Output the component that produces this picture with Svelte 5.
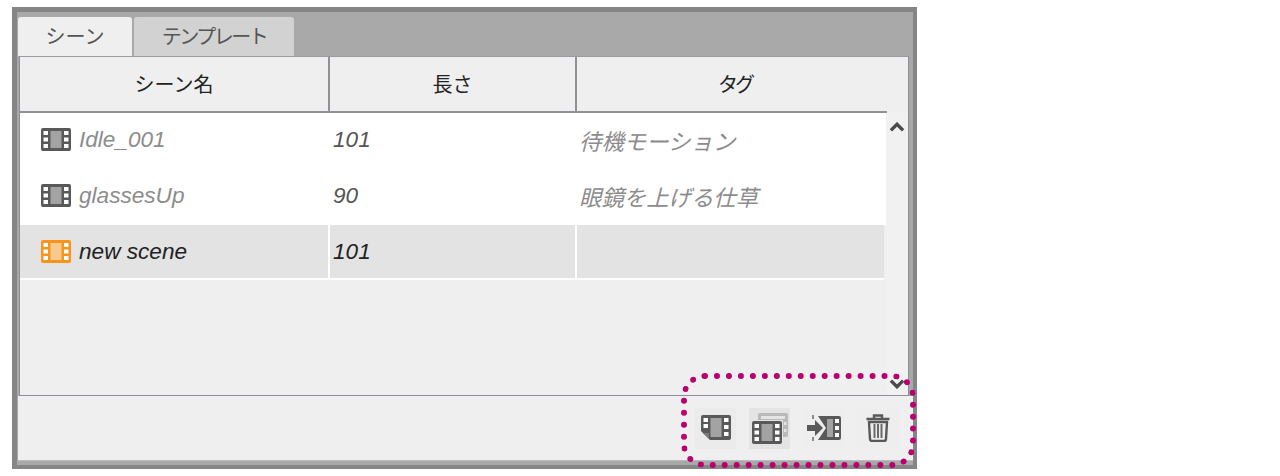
<script>
  const rows = [
    { name: "Idle_001", len: "101", tag: "待機モーション" },
    { name: "glassesUp", len: "90", tag: "眼鏡を上げる仕草" },
    { name: "new scene", len: "101", tag: "", selected: true }
  ]
</script>

{#snippet film(color, mid)}
  <svg class="film" viewBox="0 0 30 23" width="30" height="23">
    <rect width="30" height="23" rx="2" fill={color} />
    <rect x="9.5" y="3" width="11" height="17" fill={mid} />
    {#each [3, 9.5, 16] as y}
      <rect x="2.5" {y} width="4.5" height="4" fill="#fff" />
      <rect x="23" {y} width="4.5" height="4" fill="#fff" />
    {/each}
  </svg>
{/snippet}

<div class="window">
  <div class="tabs">
    <div class="tab active">シーン</div>
    <div class="tab tight">テンプレート</div>
  </div>

  <div class="panel">
    <div class="head">
      <div class="hcell">シーン名</div>
      <div class="hcell">長さ</div>
      <div class="hcell last">タグ</div>
    </div>
    <div class="body">
      <div class="list">
        {#each rows as row}
          <div class="row" class:selected={row.selected}>
            <div class="cell first">
              {@render film(row.selected ? "#f7941d" : "#595959", row.selected ? "#f8c98c" : "#a3a3a3")}
              <span>{row.name}</span>
            </div>
            <div class="cell num">{row.len}</div>
            <div class="cell tag">{row.tag}</div>
          </div>
        {/each}
      </div>
      <div class="scroll">
        <svg viewBox="0 0 14 9" width="16" height="10"><path d="M1.5 7.5 7 2l5.5 5.5" fill="none" stroke="#4a4a4a" stroke-width="3" /></svg>
        <svg viewBox="0 0 14 9" width="16" height="10"><path d="M1.5 1.5 7 7l5.5-5.5" fill="none" stroke="#4a4a4a" stroke-width="3" /></svg>
      </div>
    </div>
  </div>

  <div class="footer">
    <button class="tool">
      <svg viewBox="0 0 30 26" width="30" height="26">
        <path d="M2 0h26a2 2 0 0 1 2 2v21a2 2 0 0 1-2 2H9l-9-9V2a2 2 0 0 1 2-2z" fill="#595959" />
        <rect x="9.5" y="3" width="11" height="19" fill="#a3a3a3" />
        {#each [3, 9] as y}<rect x="2.5" {y} width="4.5" height="4" fill="#fff" />{/each}
        {#each [3, 10, 17] as y}<rect x="23" {y} width="4.5" height="4" fill="#fff" />{/each}
        <path d="M2 18h6v6z" fill="#7a7a7a" />
      </svg>
    </button>
    <button class="tool on">
      <svg viewBox="0 0 36 31" width="36" height="31">
        <rect x="6" y="0" width="30" height="24" rx="2" fill="#b9b9b9" />
        <rect x="9" y="3" width="24" height="3" fill="#e4e4e4" />
        <rect x="32" y="9" width="2.5" height="3" fill="#e4e4e4" />
        <rect x="32" y="16" width="2.5" height="3" fill="#e4e4e4" />
        <rect x="0" y="7" width="31" height="24" fill="#e4e4e4" />
        <rect x="0" y="8" width="30" height="23" rx="2" fill="#595959" />
        <rect x="9.5" y="11" width="11" height="17" fill="#a3a3a3" />
        {#each [11, 17.5, 24] as y}
          <rect x="2.5" {y} width="4.5" height="4" fill="#fff" />
          <rect x="23" {y} width="4.5" height="4" fill="#fff" />
        {/each}
      </svg>
    </button>
    <button class="tool plain">
      <svg viewBox="0 0 34 26" width="34" height="26">
        <path d="M11 1h21a2 2 0 0 1 2 2v20a2 2 0 0 1-2 2H11l8-12z" fill="#595959" />
        <rect x="20" y="4" width="6" height="18" fill="#a3a3a3" />
        {#each [4, 11, 18] as y}<rect x="28" {y} width="4" height="4" fill="#fff" />{/each}
        <path d="M0 10h8V5l8 8-8 8v-5H0z" fill="#595959" />
        <rect x="5" y="0" width="2" height="4" fill="#8a8a8a" />
        <rect x="5" y="22" width="2" height="4" fill="#8a8a8a" />
      </svg>
    </button>
    <button class="tool plain">
      <svg viewBox="0 0 24 28" width="24" height="28">
        <path d="M8 4V1.5h8V4M0.5 5h23" fill="none" stroke="#595959" stroke-width="2.4" />
        <path d="M3 8h18l-1 17a2 2 0 0 1-2 2H6a2 2 0 0 1-2-2z" fill="none" stroke="#595959" stroke-width="2.4" />
        <path d="M8.5 10v14M12 10v14M15.5 10v14" stroke="#6a6a6a" stroke-width="2" />
      </svg>
    </button>
  </div>

  <div class="highlight"></div>
</div>

<style>
  :global(body) {
    background: #fff;
  }

  .window {
    position: relative;
    box-sizing: border-box;
    width: 905px;
    height: 462px;
    margin: 7px 0 0 12px;
    border: 5px solid #858585;
    border-bottom-width: 4px;
    border-right-width: 4px;
    background: #a9a9a9;
    font-family: "Noto Sans CJK JP", "Liberation Sans", sans-serif;
    display: flex;
    flex-direction: column;
    color: #333;
  }

  .tabs {
    display: flex;
    gap: 2px;
    height: 44px;
    padding: 5px 0 0 1px;
    box-sizing: border-box;
    flex: none;
  }

  .tab {
    width: 160px;
    background: #d2d2d2;
    border-radius: 3px 3px 0 0;
    text-align: center;
    font-size: 20px;
    line-height: 37px;
    color: #555;
  }

  .tab.tight {
    letter-spacing: -2.5px;
  }

  .tab.active {
    width: 114px;
    background: #efefef;
  }

  .panel {
    box-sizing: border-box;
    height: 340px;
    flex: none;
    margin: 0 4px 0 2px;
    border: 1px solid #8c8f96;
    border-top-color: #9a9ca2;
    background: #efefef;
    display: flex;
    flex-direction: column;
  }

  .head {
    display: grid;
    grid-template-columns: 310px 247px 1fr;
    height: 56px;
    flex: none;
    position: relative;
    box-sizing: border-box;
  }

  .hcell {
    border-right: 2px solid #8f9196;
    border-bottom: 2px solid #8f9196;
    text-align: center;
    font-size: 20px;
    line-height: 54px;
    color: #222;
  }

  .hcell.last {
    border-right: none;
    padding-left: 6px;
    margin-right: 21px;
    letter-spacing: -3px;
  }

  .body {
    flex: 1;
    display: flex;
    min-height: 0;
  }

  .list {
    width: 866px;
    flex: none;
  }

  .row {
    display: grid;
    grid-template-columns: 310px 247px 1fr;
    height: 56px;
    background: #fff;
    align-items: center;
  }

  .row.selected {
    background: #e3e3e3;
    color: #222;
    height: 55px;
    align-items: stretch;
    margin-right: 2px;
  }

  .cell {
    display: flex;
    align-items: center;
    font-family: "Liberation Sans", "Noto Sans CJK JP", sans-serif;
    font-style: italic;
    font-size: 22.6px;
    color: #8c8c8c;
    height: 100%;
    box-sizing: border-box;
    padding-bottom: 2px;
    border-right: 2px solid transparent;
  }

  .selected .cell {
    color: #222;
    border-right-color: #fff;
    border-bottom: 2px solid #fff;
    padding-bottom: 0;
  }

  .selected .cell.tag {
    border-right: none;
  }

  .first {
    padding-left: 21px;
    gap: 8px;
  }

  .num {
    padding-left: 3px;
    color: #555;
  }

  .tag {
    padding-left: 2px;
    font-size: 22.4px;
  }

  .film {
    flex: none;
    margin-bottom: 1px;
  }

  .scroll {
    flex: 1;
    display: flex;
    flex-direction: column;
    justify-content: space-between;
    align-items: center;
    padding: 9px 0 6px;
    box-sizing: border-box;
    background: #f1f1f1;
  }

  .footer {
    flex: none;
    height: 65px;
    background: #efefef;
    border-bottom: 1px solid #bbb;
    display: flex;
    justify-content: flex-end;
    align-items: center;
    gap: 13px;
    padding: 0 15px 0 0;
    margin-left: 1px;
    box-sizing: border-box;
  }

  .tool {
    width: 41px;
    height: 41px;
    padding: 0;
    border: none;
    background: #ebebeb;
    display: flex;
    align-items: center;
    justify-content: center;
  }

  .tool.on {
    background: #e4e4e4;
  }

  .tool.plain {
    background: #eeeeee;
  }

  .highlight {
    position: absolute;
    left: 664px;
    top: 361px;
    width: 235px;
    height: 95px;
    box-sizing: border-box;
    border: 6px dotted #b8006e;
    border-radius: 24px;
    pointer-events: none;
  }
</style>
